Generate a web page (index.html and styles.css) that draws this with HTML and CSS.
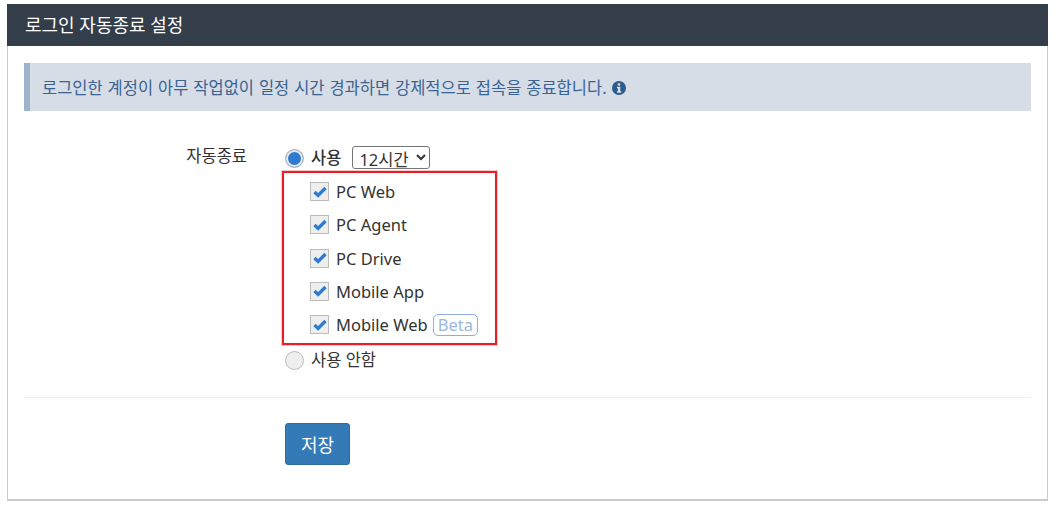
FILE: index.html
```html
<!DOCTYPE html>
<html lang="ko">
<head>
    <meta charset="UTF-8">
    <title>로그인 자동종료 설정</title>
    <link rel="stylesheet" href="styles.css">
</head>
<body>
    <div class="panel">
        <h1 class="panel-title">로그인 자동종료 설정</h1>
        <div class="panel-body">
            <div class="notice">
                <span>로그인한 계정이 아무 작업없이 일정 시간 경과하면 강제적으로 접속을 종료합니다.</span>
                <svg class="info-icon" viewBox="0 0 14 14" width="14" height="14">
                    <circle cx="7" cy="7" r="7" fill="#2d5a8c"/>
                    <rect x="5.7" y="2.3" width="2.6" height="2.3" rx="0.6" fill="#d6dde7"/>
                    <path d="M4.9 5.8h3.4v4.4h1v1.5H4.9v-1.5h1V7.3h-1z" fill="#d6dde7"/>
                </svg>
            </div>

            <div class="form-row">
                <div class="form-label">자동종료</div>
                <div class="form-field">
                    <div class="option-row">
                        <span class="radio radio-on"></span>
                        <span class="option-strong">사용</span>
                        <select class="time-select">
                            <option>12시간</option>
                        </select>
                    </div>
                    <div class="client-box">
                        <div class="client-row">
                            <span class="check"><svg viewBox="0 0 14 12" width="14" height="12"><path d="M1.5 6l3.6 3.4L12.5 2" fill="none" stroke="#2f7bd0" stroke-width="3.4"/></svg></span>
                            PC Web
                        </div>
                        <div class="client-row">
                            <span class="check"><svg viewBox="0 0 14 12" width="14" height="12"><path d="M1.5 6l3.6 3.4L12.5 2" fill="none" stroke="#2f7bd0" stroke-width="3.4"/></svg></span>
                            PC Agent
                        </div>
                        <div class="client-row">
                            <span class="check"><svg viewBox="0 0 14 12" width="14" height="12"><path d="M1.5 6l3.6 3.4L12.5 2" fill="none" stroke="#2f7bd0" stroke-width="3.4"/></svg></span>
                            PC Drive
                        </div>
                        <div class="client-row">
                            <span class="check"><svg viewBox="0 0 14 12" width="14" height="12"><path d="M1.5 6l3.6 3.4L12.5 2" fill="none" stroke="#2f7bd0" stroke-width="3.4"/></svg></span>
                            Mobile App
                        </div>
                        <div class="client-row">
                            <span class="check"><svg viewBox="0 0 14 12" width="14" height="12"><path d="M1.5 6l3.6 3.4L12.5 2" fill="none" stroke="#2f7bd0" stroke-width="3.4"/></svg></span>
                            Mobile Web
                            <span class="badge">Beta</span>
                        </div>
                    </div>
                    <div class="option-row option-off">
                        <span class="radio"></span>
                        <span>사용 안함</span>
                    </div>
                </div>
            </div>

            <div class="form-actions">
                <button class="btn">저장</button>
            </div>
        </div>
    </div>
</body>
</html>
```
FILE: styles.css
```css
body {
    margin: 0;
    padding: 4px 14px 0 7px;
    background-color: white;
    font-family: "Noto Sans", "Noto Sans CJK KR", sans-serif;
    font-size: 16px;
    color: #333;
}
.panel {
    height: 497px;
    box-sizing: border-box;
    border-left: 1px solid #ccc;
    border-right: 1px solid #ccc;
    border-bottom: 2px solid #ccc;
}
.panel-title {
    height: 42px;
    margin: 0 -1px;
    padding: 0 18px;
    background-color: #343d4a;
    color: white;
    font-size: 18px;
    font-weight: normal;
    line-height: 42px;
}
.panel-body {
    padding: 17px 16px 0;
}
.notice {
    display: flex;
    align-items: center;
    gap: 5px;
    height: 48px;
    padding-left: 12px;
    background-color: #d6dde7;
    border-left: 6px solid #9cb3c9;
    color: #3a6392;
    font-size: 16.5px;
    word-spacing: 0.6px;
}
.info-icon {
    margin-top: 1px;
}
.form-row {
    display: flex;
    padding-top: 33px;
    padding-bottom: 25px;
    border-bottom: 1px solid #eee;
}
.form-label {
    width: 223px;
    text-align: right;
    font-size: 16.5px;
    line-height: 24px;
    margin-right: 38px;
}
.form-field {
    width: 500px;
}
.option-row {
    display: flex;
    align-items: center;
    height: 26px;
    gap: 7px;
    font-size: 16.5px;
}
.option-strong {
    font-weight: 500;
}
.option-off {
    margin-top: 1px;
}
.radio {
    width: 19px;
    height: 19px;
    margin-top: 2px;
    box-sizing: border-box;
    border-radius: 50%;
    border: 1px solid #bbb;
    background-color: #eee;
}
.radio-on {
    background-color: #2f7bd0;
    box-shadow: inset 0 0 0 2px #e8e8e8;
}
.time-select {
    margin-left: 4px;
    width: 78px;
    height: 23px;
    padding-left: 2px;
    font-family: inherit;
    font-size: 16.5px;
    color: #333;
    background-color: white;
    border: 1px solid #767676;
    border-radius: 3px;
}
.client-box {
    width: 215px;
    height: 174px;
    box-sizing: border-box;
    margin: 1px 0 1px -3px;
    padding: 2px 0 0 26px;
    border: 2px solid #ec1c24;
    box-shadow: 0 0 0 1px #f9c9cb;
}
.client-row {
    display: flex;
    align-items: center;
    gap: 7px;
    height: 33.25px;
    font-size: 16.5px;
}
.check {
    display: flex;
    align-items: center;
    justify-content: center;
    width: 19px;
    height: 19px;
    box-sizing: border-box;
    background-color: #eee;
    border: 1px solid #bbb;
}
.badge {
    margin-left: -2px;
    padding: 0 4px;
    height: 22px;
    line-height: 20px;
    box-sizing: border-box;
    border: 1px solid #8fadde;
    border-radius: 5px;
    color: #9db8e0;
    font-size: 16.5px;
}
.form-actions {
    padding: 25px 0 0 261px;
}
.btn {
    width: 65px;
    height: 42px;
    padding: 0;
    background-color: #337ab7;
    color: white;
    border: 1px solid #2e6da4;
    border-radius: 3px;
    font-family: inherit;
    font-size: 18px;
    cursor: pointer;
}
```
